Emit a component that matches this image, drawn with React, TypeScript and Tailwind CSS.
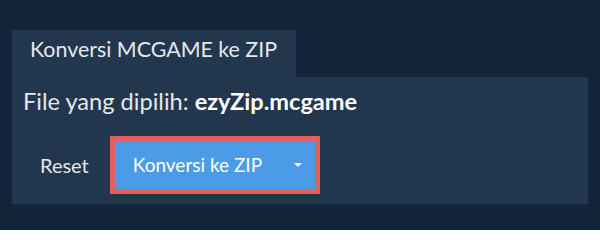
export default function App() {
  return (
    <div
      className="h-[230px] w-[600px] bg-[#11243a] px-[12px] pt-[30px] text-[#e4e8ec]"
      style={{ fontFamily: "Lato, 'Noto Sans', sans-serif" }}
    >
      {/* Tab */}
      <div className="h-[47px] w-[284px] bg-[#22374d] pl-[18px] pt-[5px] text-[21.4px] leading-[28px]">
        Konversi MCGAME ke ZIP
      </div>

      {/* Panel */}
      <div className="h-[127px] bg-[#22374d] pl-[11px] pt-[8px]">
        <div className="text-[23.6px] leading-[33px]">
          File yang dipilih: <span className="font-bold text-white">ezyZip.mcgame</span>
        </div>
        <div className="mt-[18px] flex items-center">
          <button className="px-[17px] text-[20px] text-[#e4e8ec]">Reset</button>
          <div className="ml-[4px] border-[5px] border-[#e0605b]">
            <button className="flex h-[48px] w-[200px] items-center bg-[#4b9be6] pl-[18px] pr-[13px] text-[19px] text-white">
              <span>Konversi ke ZIP</span>
              <span className="ml-auto h-0 w-0 border-x-[4px] border-t-[4px] border-x-transparent border-t-white" />
            </button>
          </div>
        </div>
      </div>
    </div>
  );
}
